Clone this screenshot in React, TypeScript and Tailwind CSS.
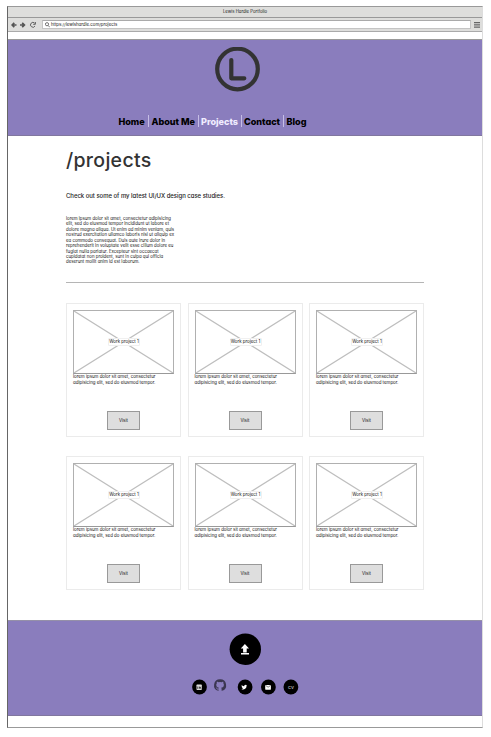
import React from "react";

const navItems = [
  { label: "Home", cls: "w-[29.5px] text-black" },
  { label: "About Me", cls: "w-[49.5px] border-l border-[#c6bee5] pl-[2.5px] text-black" },
  { label: "Projects", cls: "w-[43px] border-l border-[#c6bee5] pl-[2.5px] text-[#f0ecff]" },
  { label: "Contact", cls: "w-[42.5px] border-l border-[#c6bee5] pl-[2.5px] text-black" },
  { label: "Blog", cls: "w-[24px] border-l border-[#c6bee5] pl-[2.5px] text-black" },
];

const paragraph = [
  "lorem ipsum dolor sit amet, consectetur adipisicing",
  "elit, sed do eiusmod tempor incididunt ut labore et",
  "dolore magna aliqua. Ut enim ad minim veniam, quis",
  "nostrud exercitation ullamco laboris nisi ut aliquip ex",
  "ea commodo consequat. Duis aute irure dolor in",
  "reprehenderit in voluptate velit esse cillum dolore eu",
  "fugiat nulla pariatur. Excepteur sint occaecat",
  "cupidatat non proident, sunt in culpa qui officia",
  "deserunt mollit anim id est laborum.",
];

function Browser() {
  return (
    <div className="h-[33px] shrink-0">
      <div className="h-[11px] border-b border-[#999] bg-[#dededc] text-center text-[4.25px] leading-[10px] text-[#222]">
        Lewis Hardie Portfolio
      </div>
      <div className="flex h-[14px] items-center border-b border-[#aaa] bg-[#dededc] pl-[3px] pr-[2px]">
        <svg width="28" height="8" viewBox="0 0 28 8" fill="none" stroke="#555">
          <path d="M5.5 4H1.8M3.3 1.8L1.1 4l2.2 2.2" strokeWidth="1.7" />
          <path d="M9 4h3.7M11.2 1.8L13.4 4l-2.2 2.2" strokeWidth="1.7" />
          <path d="M23.7 2.2A2.4 2.4 0 1 0 24 5M24.4 1v2.3h-2.2" strokeWidth="0.9" />
        </svg>
        <div className="ml-[3px] flex h-[9px] flex-1 items-center border border-[#c4c4c4] border-t-[#aaa] bg-white pl-[2px]">
          <svg width="5" height="6" viewBox="0 0 5 6" fill="none" stroke="#555" strokeWidth="0.8">
            <circle cx="2" cy="2.2" r="1.6" />
            <path d="M3.2 3.5L4.8 5.3" />
          </svg>
          <span className="ml-px whitespace-nowrap text-[4.35px] leading-[7px] text-[#111]">https://lewishardie.com/projects</span>
        </div>
        <svg className="ml-[3px]" width="6" height="6" viewBox="0 0 6 6" fill="#666">
          <path d="M0 0h6v1.3H0zM0 2.2h6v1.3H0zM0 4.4h6v1.3H0z" />
        </svg>
      </div>
      <div className="h-[8px] border-b border-[#999] bg-white" />
    </div>
  );
}

function Header() {
  return (
    <header className="flex h-[96px] shrink-0 flex-col border-b border-[#81779f] bg-[#8a7dbd]">
      <svg className="ml-[207px] mt-[7px]" width="46" height="45" viewBox="0 0 46 45" fill="none" stroke="#333">
        <circle cx="22.5" cy="22" r="20.3" strokeWidth="4.2" />
        <path d="M16.3 13v18.3h13" strokeWidth="4.2" strokeLinecap="round" strokeLinejoin="round" />
      </svg>
      <nav className="ml-[110.5px] mt-[23px] flex h-[12px] items-center text-[9.05px] font-extrabold leading-[12px]">
        {navItems.map((item) => (
          <div key={item.label} className={`${item.cls} flex h-[12px] shrink-0 items-center whitespace-nowrap pt-px`}>
            {item.label}
          </div>
        ))}
      </nav>
    </header>
  );
}

function Card() {
  return (
    <article className="flex h-[134px] flex-col border border-[#ebebeb] px-[6px] pt-[6px]">
      <div className="relative h-[64px] w-[101px] shrink-0 border border-[#b0b0b0] border-b-[#999]">
        <svg className="block" width="99" height="62" viewBox="0 0 99 62" stroke="#bebebe" strokeWidth="1.2">
          <path d="M0 0L99 62M0 62L99 0" />
        </svg>
        <div className="absolute left-[34px] top-[27px] h-[8px] w-[32px] rounded-[1px] border border-[#f0f0f0] bg-white text-[4.4px] leading-[6px] text-[#111]">
          <div className="flex justify-center whitespace-nowrap">Work project 1</div>
        </div>
      </div>
      <div className="whitespace-nowrap text-[4.4px] leading-[5.6px] text-[#111]">
        <div>lorem ipsum dolor sit amet, consectetur</div>
        <div>adipisicing elit, sed do eiusmod tempor.</div>
      </div>
      <button className="ml-[34px] mt-[26px] h-[19px] w-[33px] shrink-0 border border-[#999] bg-[#dedede] text-[4.4px] leading-[16px] text-[#111]">
        Visit
      </button>
    </article>
  );
}

function Footer() {
  return (
    <footer className="h-[96px] shrink-0 border-y border-t-[#9590a8] border-b-[#81779f] bg-[#8a7dbd]">
      <svg className="ml-[221px] mt-[12px] block" width="33" height="33" viewBox="0 0 33 33">
        <circle cx="16.3" cy="16.2" r="15.7" fill="#000" />
        <path d="M15.9 11l4.1 4.4h-2.3v4h-3.6v-4h-2.3zM12 20h8v1.5h-8z" fill="#fff" />
      </svg>
      <div className="ml-[184px] mt-[12px] flex h-[17px] w-[108px] items-start">
        <svg width="108" height="17" viewBox="0 0 108 17">
          <circle cx="7.5" cy="9" r="7.4" />
          <rect x="4.5" y="6.6" width="5.3" height="5.3" rx="0.6" fill="#ddd" />
          <path d="M5.7 8.5v2.4M7.3 10.9V8.5M7.3 9.5q1.5-1.5 1.5 1.4" stroke="#000" strokeWidth="0.6" fill="none" />
          <path transform="translate(22.1 1) scale(.5)" fill="#3b3650" d="M12 .3a12 12 0 0 0-3.8 23.4c.6.1.8-.3.8-.6v-2.2c-3.3.7-4-1.4-4-1.4-.6-1.4-1.4-1.8-1.4-1.8-1-.7.1-.7.1-.7 1.2 0 1.9 1.2 1.9 1.2 1 1.8 2.8 1.3 3.5 1 0-.8.4-1.3.7-1.6-2.7-.3-5.5-1.3-5.5-6 0-1.2.5-2.3 1.3-3.1-.2-.4-.6-1.6 0-3.2 0 0 1-.3 3.4 1.2a11.5 11.5 0 0 1 6 0c2.3-1.5 3.3-1.2 3.3-1.2.6 1.6.2 2.8 0 3.2.9.8 1.3 1.9 1.3 3.2 0 4.6-2.8 5.6-5.5 5.9.5.4.9 1 .9 2.2v3.3c0 .3.1.7.8.6A12 12 0 0 0 12 .3" />
          <circle cx="53.1" cy="9" r="7.4" />
          <path transform="translate(49.4 6.2) scale(.24)" fill="#fff" d="M24 4.6a10 10 0 0 1-2.8.8 5 5 0 0 0 2.1-2.7 10 10 0 0 1-3.1 1.2 5 5 0 0 0-8.4 4.5A14 14 0 0 1 1.6 3.1a5 5 0 0 0 1.5 6.6 5 5 0 0 1-2.2-.6 5 5 0 0 0 4 4.9 5 5 0 0 1-2.3.1 5 5 0 0 0 4.6 3.4A10 10 0 0 1 0 19.5a14 14 0 0 0 21.5-12.4A10 10 0 0 0 24 4.6" />
          <circle cx="76.4" cy="9" r="7.4" />
          <rect x="73.2" y="6.9" width="5.7" height="4.8" rx="0.4" fill="#fff" />
          <path d="M73.5 7.3l2.6 1.9 2.6-1.9" stroke="#000" strokeWidth="0.5" fill="none" />
          <circle cx="98.9" cy="9" r="7.4" />
          <text x="99" y="10.5" textAnchor="middle" fontSize="3.9" fontWeight="700" fill="#aaa">CV</text>
        </svg>
      </div>
    </footer>
  );
}

export default function App() {
  return (
    <div className="h-[737px] w-[491px] overflow-hidden bg-white pl-[7px] pt-[6px] font-['Inter','Noto_Sans',sans-serif] [font-feature-settings:'cv11']">
      <div className="flex h-[722px] w-[476px] flex-col border border-[#999] border-l-[#666] border-r-[#ddd]">
        <Browser />
        <Header />
        <main className="flex h-[484px] shrink-0 flex-col pl-[58px]">
          <h1 className="mt-[11px] h-[27px] whitespace-nowrap text-[19.5px] font-medium leading-[27px] tracking-[0.3px] text-[#333]">/projects</h1>
          <p className="mt-[17px] h-[10px] whitespace-nowrap text-[6px] font-medium leading-[10px] tracking-[-0.04px] text-[#222]">
            Check out some of my latest UI/UX design case studies.
          </p>
          <div className="mt-[15px] h-[49px] whitespace-nowrap text-[4.35px] leading-[5.42px] text-[#111]">
            {paragraph.map((line) => <div key={line}>{line}</div>)}
          </div>
          <div className="mt-[17px] h-px w-[358px] bg-[#b5b5b5]" />
          <div className="mt-[20px] grid grid-cols-[115px_115px_115px] gap-x-[6.5px] gap-y-[19px]">
            {[1, 2, 3, 4, 5, 6].map((n) => <Card key={n} />)}
          </div>
        </main>
        <Footer />
      </div>
    </div>
  );
}
